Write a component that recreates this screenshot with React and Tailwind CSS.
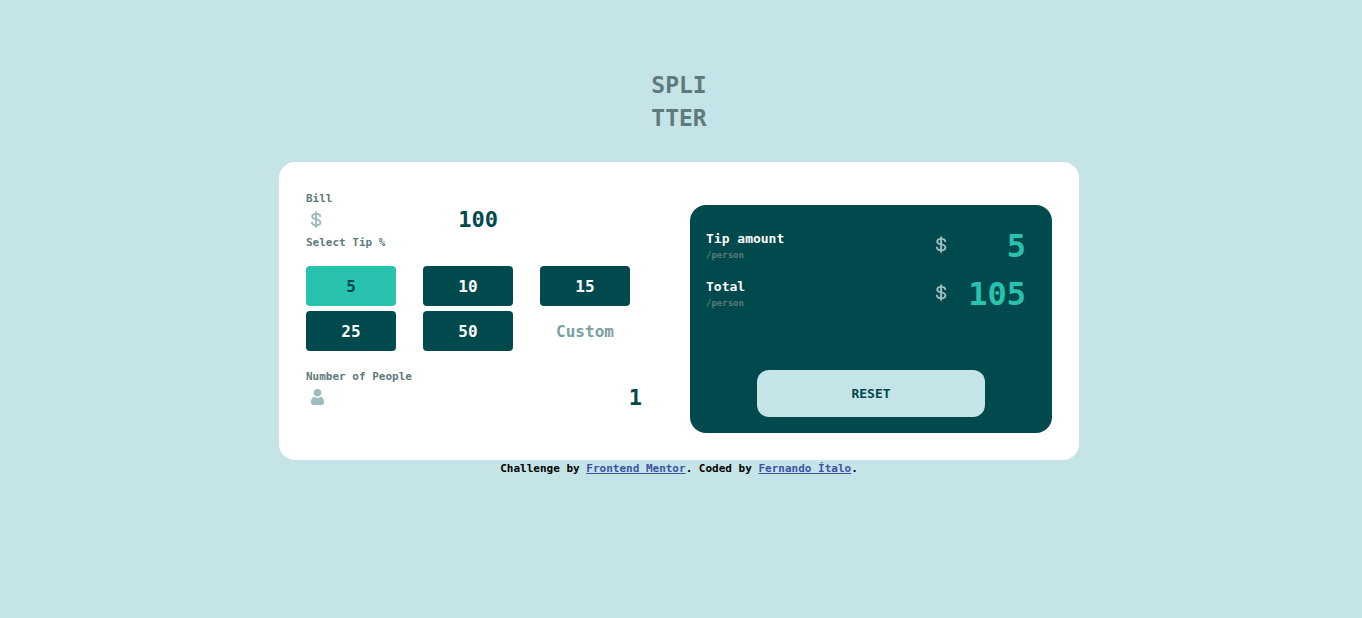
import { useState } from 'react';

const TIPS = [5, 10, 15, 25, 50];

function DollarIcon({ className = '' }) {
  return (
    <svg
      className={className}
      width="11"
      height="17"
      viewBox="0 0 11 17"
      fill="none"
      stroke="#9ebbbd"
      strokeWidth="1.9"
      aria-hidden="true"
    >
      <path d="M9.200 5.900V5.400C9.200 3.900 7.500 2.900 5.100 2.900 2.700 2.900 1.200 4 1.200 5.600c0 1.900 1.600 2.400 3.900 2.800 2.400.4 4.300 1 4.300 3 0 1.800-1.900 2.800-4.300 2.800S.9 13.100.9 11.300v-.6" />
      <path d="M5.100 0.500v16.200" strokeWidth="2" />
    </svg>
  );
}

function PersonIcon() {
  return (
    <svg className="shrink-0" width="13" height="16" viewBox="0 0 13 16" fill="#9ebbbd" aria-hidden="true">
      <circle cx="6.500" cy="3.800" r="3.800" />
      <path d="M3.200 7.900c.5 0 .8.200 1.100.4.600.4 1.300.6 2.200.6s1.600-.2 2.200-.6c.3-.2.600-.4 1.100-.4C11.900 7.900 13 10.600 13 13.300 13 15 12.200 16 10.700 16H2.300C.8 16 0 15 0 13.300 0 10.600 1.100 7.900 3.200 7.900z" />
    </svg>
  );
}

function Result({ title, value }) {
  return (
    <div className="flex h-12 items-center pr-[10px]">
      <div className="flex-1">
        <p className="text-[13px] leading-4 text-white">{title}</p>
        <p className="text-[9px] leading-4 text-[#5e7a7d]">/person</p>
      </div>
      <DollarIcon className="mb-[6px] shrink-0" />
      <output className="mb-[2px] w-[79px] text-right text-[32px] leading-none text-[#28c2ae]">{value}</output>
    </div>
  );
}

export default function App() {
  const [bill, setBill] = useState('100');
  const [tip, setTip] = useState(5);
  const [custom, setCustom] = useState('');
  const [people, setPeople] = useState('1');

  const count = Math.max(1, Number(people) || 1);
  const rate = custom ? Number(custom) || 0 : tip;
  const total = Number(bill) || 0;
  const tipEach = Math.round((total * rate) / count) / 100;
  const totalEach = Math.round((total * (100 + rate)) / count) / 100;

  const reset = () => {
    setBill('');
    setTip(0);
    setCustom('');
    setPeople('1');
  };

  return (
    <div className="flex min-h-screen flex-col items-center bg-[#c5e4e7] pr-1 pt-[69px] font-['DejaVu_Sans_Mono',monospace] font-bold text-[#5e7a7d]">
      <h1 className="mb-[27px] text-[23px] leading-[33px]">
        SPLI
        <br />
        TTER
      </h1>

      <main className="grid w-full max-w-[800px] gap-12 rounded-2xl bg-white p-[27px] md:grid-cols-[336fr_362fr]">
        <form onSubmit={(e) => e.preventDefault()}>
          <label htmlFor="bill" className="block text-[11px] leading-[19px]">
            Bill
          </label>
          <div className="mb-[3px] flex h-[22px] w-48 items-center pl-[5px]">
            <DollarIcon className="shrink-0" />
            <input
              id="bill"
              inputMode="decimal"
              value={bill}
              onChange={(e) => setBill(e.target.value)}
              className="w-full min-w-0 bg-transparent pt-[2px] text-right text-[22px] leading-6 text-[#00494d] outline-none"
            />
          </div>

          <fieldset>
            <legend className="text-[11px] leading-[19px]">Select Tip %</legend>
            <div className="mt-[14px] grid grid-cols-[repeat(3,90px)] gap-x-[27px] gap-y-[5px]">
              {TIPS.map((value) => (
                <button
                  key={value}
                  type="button"
                  aria-pressed={tip === value}
                  onClick={() => {
                    setTip(value);
                    setCustom('');
                  }}
                  className={
                    tip === value
                      ? 'h-10 rounded bg-[#28c2ae] pt-[2px] text-[16px] text-[#00494d]'
                      : 'h-10 rounded bg-[#00494d] pt-[2px] text-[16px] text-white'
                  }
                >
                  {value}
                </button>
              ))}
              <input
                aria-label="Custom tip"
                placeholder="Custom"
                inputMode="decimal"
                value={custom}
                onChange={(e) => setCustom(e.target.value)}
                className="h-10 w-full min-w-0 bg-transparent text-center text-[16px] text-[#00494d] outline-none placeholder:text-[#79a0a3]"
              />
            </div>
          </fieldset>

          <label htmlFor="people" className="mt-4 block text-[11px] leading-[19px]">
            Number of People
          </label>
          <div className="flex h-[22px] items-center pl-[5px]">
            <PersonIcon />
            <input
              id="people"
              inputMode="numeric"
              value={people}
              onChange={(e) => setPeople(e.target.value)}
              className="w-full min-w-0 bg-transparent pt-[2px] text-right text-[22px] leading-6 text-[#00494d] outline-none"
            />
          </div>
        </form>

        <section className="mt-4 flex flex-col rounded-2xl bg-[#00494d] px-4 pb-4 pt-[18px]">
          <Result title="Tip amount" value={tipEach} />
          <Result title="Total" value={totalEach} />
          <button
            type="button"
            onClick={reset}
            className="mt-[51px] h-[47px] w-[228px] self-center rounded-xl bg-[#c5e4e7] text-[13px] text-[#00494d]"
          >
            RESET
          </button>
        </section>
      </main>

      <footer className="text-center text-[11px] leading-[17px] text-black">
        Challenge by{' '}
        <a href="https://www.frontendmentor.io" className="text-[#3e52a3] underline">
          Frontend Mentor
        </a>
        . Coded by{' '}
        <a href="#author" className="text-[#3e52a3] underline">
          Fernando Ítalo
        </a>
        .
      </footer>
    </div>
  );
}
